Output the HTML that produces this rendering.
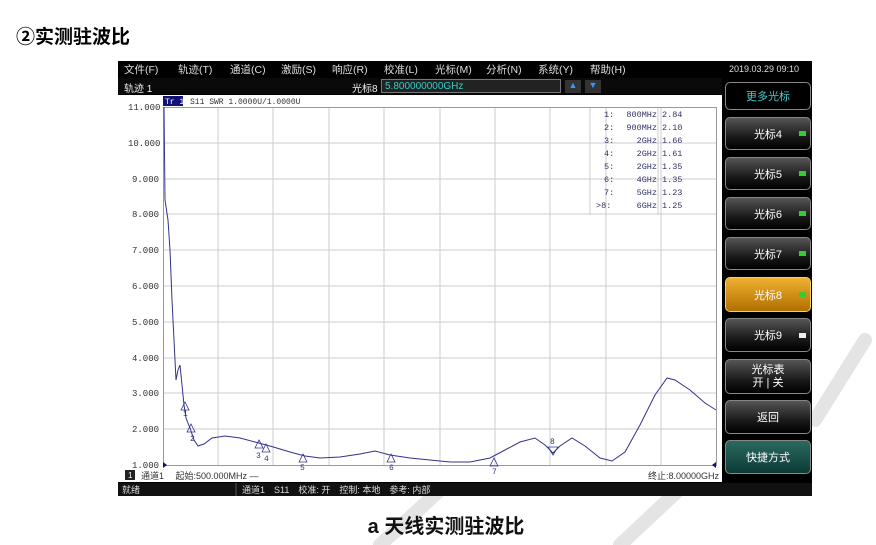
<!DOCTYPE html><html><head><meta charset="utf-8"><style>
body{margin:0;width:876px;height:545px;background:#fff;position:relative;overflow:hidden;font-family:"Liberation Sans","Noto Sans CJK SC",sans-serif}
.a{position:absolute}
.btn{position:absolute;left:725px;width:86px;border:1px solid #888;border-radius:5px;background:linear-gradient(#555,#1a1a1a 60%,#000);color:#fff;font-size:11px;display:flex;align-items:center;justify-content:center;box-sizing:border-box}
.led{position:absolute;right:4px;width:7px;height:5px;background:#3c3}
.m{font-size:10.5px;color:#ddd;top:62px}
</style></head><body>
<svg class="a" style="left:0;top:0" width="876" height="545"><g stroke="#e4e4e4" stroke-width="14" stroke-linecap="round"><path d="M865 340L815 420"/><path d="M700 470L620 545"/><path d="M440 490L380 545"/></g></svg>
<div class="a" style="left:16px;top:22px;font-size:19px;font-weight:bold;color:#000">②实测驻波比</div>
<div class="a" style="left:118px;top:61px;width:694px;height:435px;background:#000"></div>
<div class="a m" style="left:124px">文件(F)</div><div class="a m" style="left:178px">轨迹(T)</div><div class="a m" style="left:230px">通道(C)</div><div class="a m" style="left:281px">激励(S)</div><div class="a m" style="left:332px">响应(R)</div><div class="a m" style="left:384px">校准(L)</div><div class="a m" style="left:435px">光标(M)</div><div class="a m" style="left:486px">分析(N)</div><div class="a m" style="left:538px">系统(Y)</div><div class="a m" style="left:590px">帮助(H)</div><div class="a m" style="left:729px;font-size:9px;top:64px">2019.03.29 09:10</div>
<div class="a" style="left:118px;top:78px;width:604px;height:16px;background:#0a0a0a"></div>
<div class="a" style="left:124px;top:80px;font-size:10px;color:#eee">轨迹 1</div>
<div class="a" style="left:352px;top:80px;font-size:10px;color:#eee">光标8</div>
<div class="a" style="left:381px;top:79px;width:180px;height:14px;background:#222;border:1px solid #777;color:#3cc;font-size:10px;line-height:14px;padding-left:3px;box-sizing:border-box">5.800000000GHz</div>
<div class="a" style="left:565px;top:80px;width:16px;height:13px;background:#333;color:#39f;font-size:9px;text-align:center">▲</div>
<div class="a" style="left:585px;top:80px;width:16px;height:13px;background:#333;color:#39f;font-size:9px;text-align:center">▼</div>
<div class="a" style="left:118px;top:95px;width:604px;height:387px;background:#fff"></div>
<div class="btn" style="top:82px;height:28px;color:#4cc;background:#000">更多光标</div>
<div class="btn" style="top:117px;height:33px">光标4<span class="led"></span></div>
<div class="btn" style="top:157px;height:33px">光标5<span class="led"></span></div>
<div class="btn" style="top:197px;height:33px">光标6<span class="led"></span></div>
<div class="btn" style="top:237px;height:33px">光标7<span class="led"></span></div>
<div class="btn" style="top:277px;height:35px;background:linear-gradient(#f0b030,#b07000);border-color:#fc6">光标8<span class="led"></span></div>
<div class="btn" style="top:318px;height:34px">光标9<span class="led" style="background:#eee"></span></div>
<div class="btn" style="top:359px;height:35px;line-height:13px;text-align:center">光标表<br>开 | 关</div>
<div class="btn" style="top:400px;height:34px">返回</div>
<div class="btn" style="top:440px;height:34px;background:linear-gradient(#2a6a60,#0c3a34)">快捷方式</div>
<svg class="a" style="left:0;top:0" width="876" height="545">
<g stroke="#ccc" stroke-width="1">
<path d="M218 107V465M273 107V465M329 107V465M384 107V465M440 107V465M495 107V465M550 107V465M606 107V465M661 107V465"/>
<path d="M163 143H716M163 179H716M163 214H716M163 250H716M163 286H716M163 322H716M163 358H716M163 393H716M163 429H716"/>
</g>
<rect x="163.5" y="107.5" width="553" height="358" fill="none" stroke="#999"/>
<line x1="590" y1="108" x2="590" y2="215" stroke="#ccc"/><line x1="658" y1="108" x2="658" y2="215" stroke="#ccc"/>
<g font-family="Liberation Mono,monospace" font-size="9" fill="#333">
<text x="128" y="110">11.000</text><text x="128" y="146">10.000</text><text x="132" y="182">9.000</text><text x="132" y="217">8.000</text><text x="132" y="253">7.000</text><text x="132" y="289">6.000</text><text x="132" y="325">5.000</text><text x="132" y="361">4.000</text><text x="132" y="396">3.000</text><text x="132" y="432">2.000</text><text x="132" y="468">1.000</text>
</g>
<rect x="163" y="96" width="20" height="10" fill="#117"/><text x="165" y="104" font-size="8" fill="#fff" font-family="Liberation Mono,monospace">Tr 1</text>
<text x="190" y="104" font-size="8" fill="#333" font-family="Liberation Mono,monospace">S11 SWR 1.0000U/1.0000U</text>
<g font-family="Liberation Mono,monospace" font-size="8.5" fill="#336">
<text x="604" y="117">1:</text><text x="604" y="130">2:</text><text x="604" y="143">3:</text><text x="604" y="156">4:</text><text x="604" y="169">5:</text><text x="604" y="182">6:</text><text x="604" y="195">7:</text><text x="596" y="208">&gt;8:</text>
<g text-anchor="end"><text x="657" y="117">800MHz</text><text x="657" y="130">900MHz</text><text x="657" y="143">2GHz</text><text x="657" y="156">2GHz</text><text x="657" y="169">2GHz</text><text x="657" y="182">4GHz</text><text x="657" y="195">5GHz</text><text x="657" y="208">6GHz</text></g>
<text x="662" y="117">2.84</text><text x="662" y="130">2.10</text><text x="662" y="143">1.66</text><text x="662" y="156">1.61</text><text x="662" y="169">1.35</text><text x="662" y="182">1.35</text><text x="662" y="195">1.23</text><text x="662" y="208">1.25</text>
</g>
<polyline fill="none" stroke="#33338a" stroke-width="1" points="164,107 165,200 168,220 170,250 172,300 174,340 176,380 178,370 180,365 182,385 184,405 186,418 190,428 194,440 198,446 204,444 212,438 225,436 240,438 255,442 270,446 290,452 305,456 320,458 340,457 360,454 375,451 390,455 410,458 430,460 450,462 470,462 490,458 505,450 520,442 535,438 545,445 553,453 560,446 572,438 585,446 600,458 612,461 625,452 640,425 655,395 667,378 675,380 690,390 705,403 716,410"/>
<g fill="none" stroke="#33338a" stroke-width="0.8">
<path d="M181 410l4-8 4 8z M187 432l4-8 4 8z M255 448l4-8 4 8z M262 452l4-8 4 8z M299 462l4-8 4 8z M387 462l4-8 4 8z M490 466l4-8 4 8z M548 447l5 8 5-8z"/>
</g>
<g font-size="8" fill="#336" font-family="Liberation Mono,monospace"><text x="183" y="416">1</text><text x="190" y="441">2</text><text x="256" y="458">3</text><text x="264" y="461">4</text><text x="300" y="470">5</text><text x="389" y="470">6</text><text x="492" y="474">7</text><text x="550" y="444">8</text></g>
<path d="M163 462l4 3-4 3zM716 462l-4 3 4 3z" fill="#117"/>
<rect x="125" y="470" width="10" height="10" fill="#222"/><text x="128" y="478" font-size="8" fill="#fff">1</text>
<text x="141" y="479" font-size="9" fill="#333">通道1　 起始:500.000MHz —</text>
<text x="648" y="479" font-size="9" fill="#333">终止:8.00000GHz</text>
<rect x="118" y="483" width="694" height="13" fill="#111"/>
<line x1="236" y1="483" x2="236" y2="496" stroke="#555"/>
<text x="122" y="493" font-size="9" fill="#ddd">就绪</text>
<text x="242" y="493" font-size="9" fill="#ddd">通道1　S11　校准: 开　控制: 本地　参考: 内部</text>
</svg>
<div class="a" style="left:0;width:892px;top:510px;text-align:center;font-size:20px;font-weight:bold;color:#111">a 天线实测驻波比</div>
</body></html>
